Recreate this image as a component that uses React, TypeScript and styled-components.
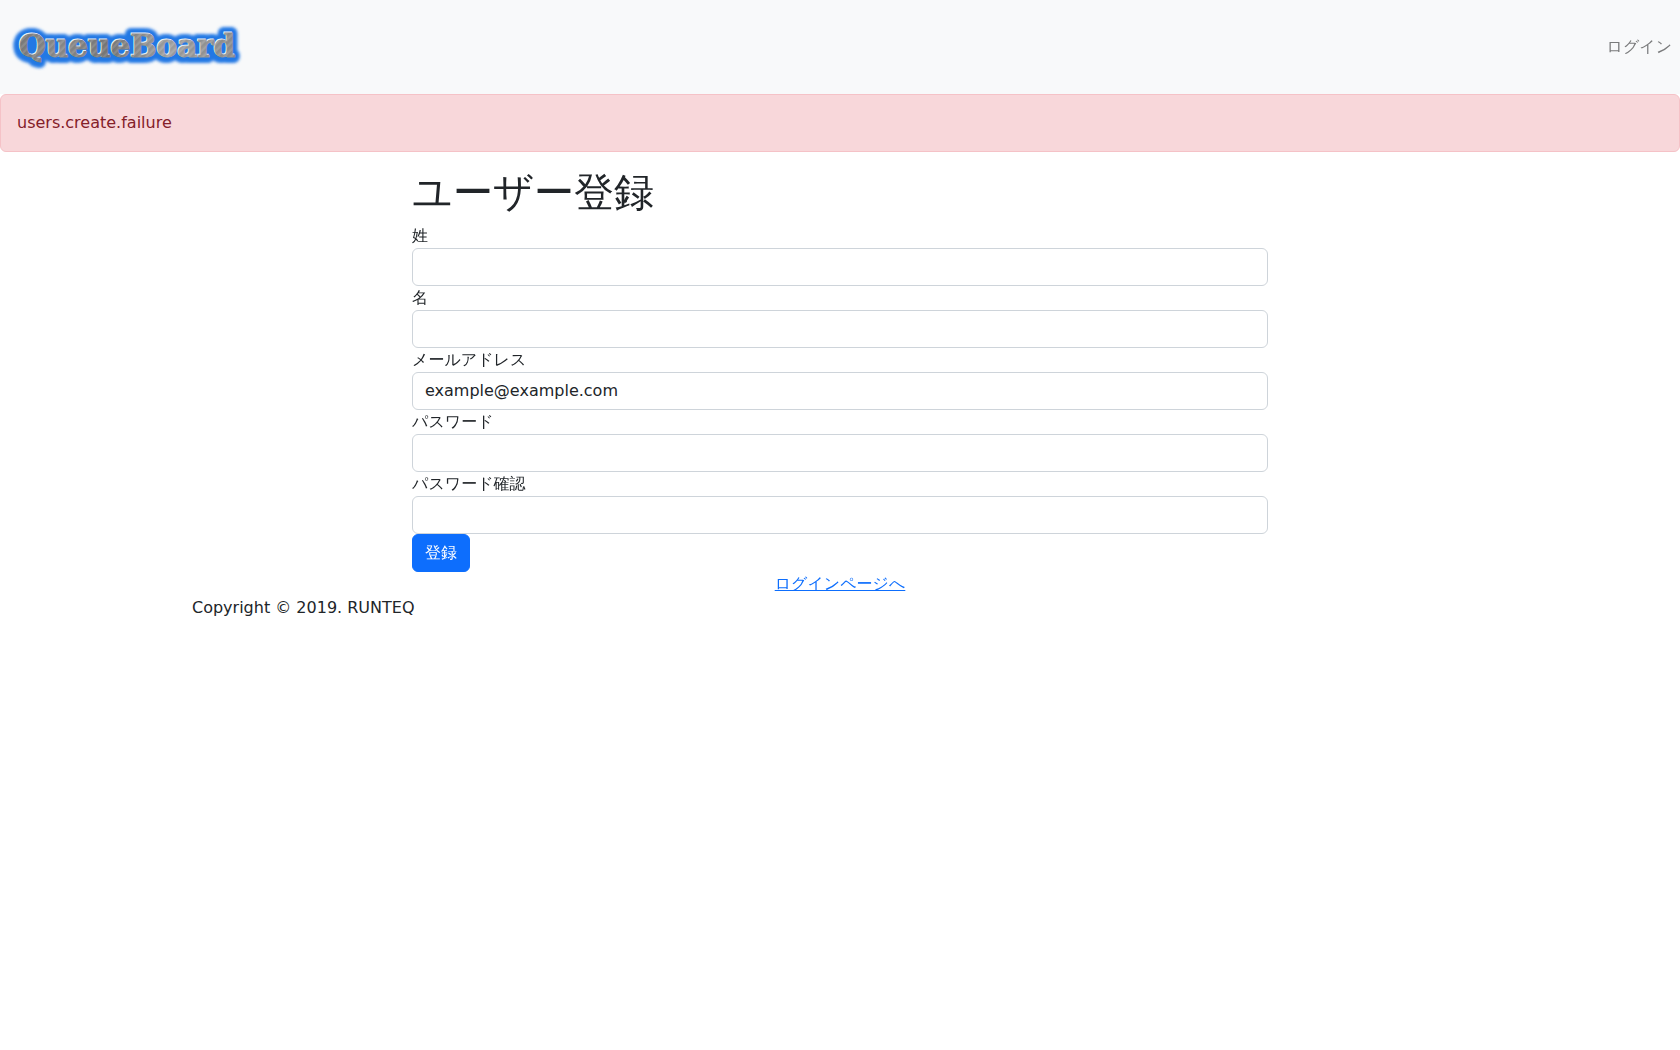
import React from "react";
import styled, { createGlobalStyle } from "styled-components";

const GlobalStyle = createGlobalStyle`
  *, *::before, *::after { box-sizing: border-box; }
  body {
    margin: 0;
    background: #fff;
    color: #212529;
    font-family: "DejaVu Sans", "WenQuanYi Zen Hei", "Noto Sans CJK JP", sans-serif;
    font-size: 16px;
    line-height: 24px;
  }
`;

const Navbar = styled.header`
  display: flex;
  align-items: center;
  justify-content: space-between;
  min-height: 94px;
  padding: 8px 0;
  background: #f8f9fa;
`;

const Brand = styled.a`
  display: flex;
  margin-left: 8px;
`;

const NavLink = styled.a`
  padding: 8px;
  color: #7a7b7c;
  text-decoration: none;
`;

const Alert = styled.div`
  margin-bottom: 16px;
  padding: 16px;
  border: 1px solid #f5c2c7;
  border-radius: 6px;
  background: #f8d7da;
  color: #842029;
`;

const Container = styled.div`
  width: 100%;
  max-width: 1320px;
  margin: 0 auto;
  padding: 0 12px;
`;

const Row = styled.div`
  display: flex;
  justify-content: center;
  margin: 0 -12px;
`;

const Column = styled.main`
  width: calc(100% * 2 / 3);
  padding: 0 12px;
`;

const Title = styled.h1`
  margin: 0 0 8px;
  font-size: 40px;
  font-weight: 500;
  line-height: 48px;
`;

const Field = styled.div`
  display: flex;
  flex-direction: column;
  align-items: flex-start;
`;

const Input = styled.input`
  width: 100%;
  padding: 6px 12px;
  border: 1px solid #ced4da;
  border-radius: 6px;
  background: #fff;
  color: #212529;
  font: inherit;
`;

const SubmitButton = styled.button`
  display: block;
  padding: 6px 12px;
  border: 1px solid #0d6efd;
  border-radius: 6px;
  background: #0d6efd;
  color: #fff;
  font: inherit;
  cursor: pointer;
`;

const Centered = styled.div`
  text-align: center;
`;

const TextLink = styled.a`
  color: #0d6efd;
`;

const LogoText = styled.text`
  font-family: "DejaVu Serif", serif;
  font-size: 31px;
  font-weight: 700;
`;

function Logo() {
  return (
    <svg width="240" height="60" viewBox="0 0 240 60" role="img" aria-label="QueueBoard">
      <defs>
        <linearGradient id="metal" x1="0" y1="0" x2="1" y2="0">
          <stop offset="0" stopColor="#7c7c7c" />
          <stop offset="0.18" stopColor="#8c8c8c" />
          <stop offset="0.42" stopColor="#787878" />
          <stop offset="0.68" stopColor="#a2a2a2" />
          <stop offset="1" stopColor="#8e8e8e" />
        </linearGradient>
        <pattern id="brushed" width="5" height="5" patternUnits="userSpaceOnUse" patternTransform="rotate(45)">
          <path d="M1 0V5" stroke="#fff" strokeOpacity="0.2" />
          <path d="M3 0V5" stroke="#444" strokeOpacity="0.12" />
        </pattern>
        <filter id="glow" x="-10%" y="-40%" width="120%" height="180%">
          <feGaussianBlur stdDeviation="1.8" />
        </filter>
      </defs>
      <LogoText
        x="10"
        y="40"
        fill="#2378e4"
        stroke="#2378e4"
        strokeWidth="12"
        strokeLinejoin="round"
        filter="url(#glow)"
        aria-hidden="true"
      >
        QueueBoard
      </LogoText>
      <LogoText x="10" y="39" fill="#e6effa" stroke="#e6effa" strokeWidth="0.8" aria-hidden="true">QueueBoard</LogoText>
      <LogoText x="11" y="40" fill="url(#metal)" stroke="url(#metal)" strokeWidth="0.8">QueueBoard</LogoText>
      <LogoText x="11" y="40" fill="url(#brushed)" aria-hidden="true">QueueBoard</LogoText>
    </svg>
  );
}

const fields = [
  { id: "last-name", label: "姓", type: "text", value: "" },
  { id: "first-name", label: "名", type: "text", value: "" },
  { id: "email", label: "メールアドレス", type: "email", value: "example@example.com" },
  { id: "password", label: "パスワード", type: "password", value: "" },
  { id: "password-confirmation", label: "パスワード確認", type: "password", value: "" },
];

export default function App() {
  return (
    <>
      <GlobalStyle />
      <Navbar>
        <Brand href="#"><Logo /></Brand>
        <nav><NavLink href="#login">ログイン</NavLink></nav>
      </Navbar>
      <Alert role="alert">users.create.failure</Alert>
      <Container>
        <Row>
          <Column>
            <Title>ユーザー登録</Title>
            <form onSubmit={(event) => event.preventDefault()}>
              {fields.map((field) => (
                <Field key={field.id}>
                  <label htmlFor={field.id}>{field.label}</label>
                  <Input id={field.id} name={field.id} type={field.type} defaultValue={field.value} />
                </Field>
              ))}
              <SubmitButton type="submit">登録</SubmitButton>
            </form>
            <Centered><TextLink href="#login">ログインページへ</TextLink></Centered>
          </Column>
        </Row>
        <footer>Copyright © 2019. RUNTEQ</footer>
      </Container>
    </>
  );
}
